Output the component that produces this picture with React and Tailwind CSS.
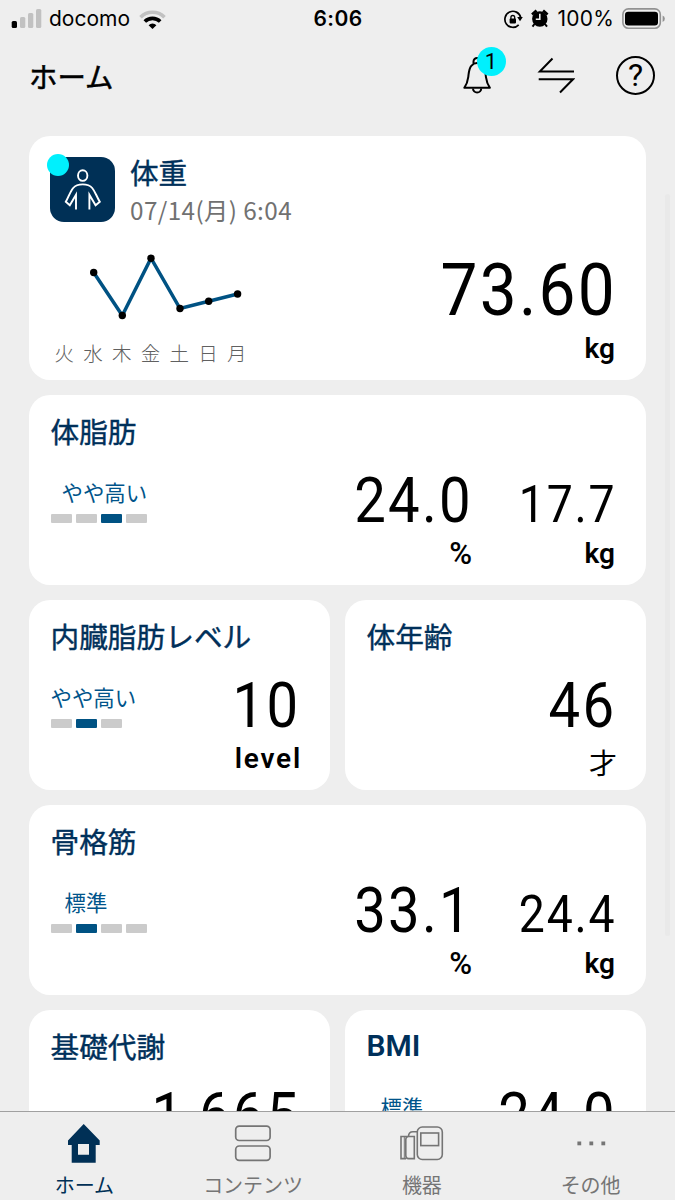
import clsx from "clsx";

const WEEKDAYS = ["火", "水", "木", "金", "土", "日", "月"];

const WEIGHT_POINTS = [
  [93.7, 272.5],
  [122.3, 315.5],
  [151, 258.2],
  [180, 308.5],
  [208.7, 301.3],
  [237.6, 294],
];

const Card = ({ title, latin, children }) => (
  <section className="h-[190px] shrink-0 bg-white rounded-[21px] pl-[21.5px] pr-[31px]">
    <h2
      className={clsx(
        "pt-[15px] leading-[41px] h-[56px] text-[#00305a] whitespace-nowrap",
        latin
          ? "font-['Roboto'] text-[30px] font-semibold"
          : "text-[28.7px] [-webkit-text-stroke:0.4px]",
      )}
    >
      {title}
    </h2>
    <div className="flex justify-between">{children}</div>
  </section>
);

// Rating label with its segmented gauge
const Level = ({ label, total, active, indent }) => (
  <div className="pt-[29px]">
    <p
      className={clsx(
        "text-[21.4px] leading-6 h-6 text-[#00548a] whitespace-nowrap",
        indent,
      )}
    >
      {label}
    </p>
    <div className="flex gap-[3.5px] mt-[10px]">
      {Array.from({ length: total }, (_, i) => (
        <span
          key={i}
          className={clsx(
            "w-[21.6px] h-[9px] rounded-[1px]",
            i === active ? "bg-[#005283]" : "bg-[#cbcbcb]",
          )}
        />
      ))}
    </div>
  </div>
);

const Unit = ({ children }) => (
  <span
    className={clsx(
      "leading-8 h-8",
      children === "%" ? "text-[31px] -mr-px" : "text-[28px]",
      children === "才" && "pt-[3px] -mr-[2px]",
      children === "%" && "font-['Roboto'] font-medium",
      children === "kg" && "font-['Roboto'] font-semibold",
      children === "level" &&
        "font-['Roboto'] font-semibold tracking-[1.8px] -mr-[3px]",
    )}
  >
    {children}
  </span>
);

const Value = ({ value, unit, size = "md", className }) => (
  <div className={clsx("flex flex-col items-end pt-[24px]", className)}>
    <span
      className={clsx(
        "font-['Roboto'] h-[52px] mb-[10.5px] whitespace-nowrap origin-right scale-x-90",
        size === "md" &&
          "text-[62.5px] leading-[52px] tracking-[2.5px] -mr-[1.5px]",
        size === "sm" && "text-[51.5px] leading-[60px] tracking-[2px] -mr-px",
      )}
    >
      {value}
    </span>
    <Unit>{unit}</Unit>
  </div>
);

const StatusBar = () => (
  <div className="flex items-center justify-between h-[37px] pl-[11px] pr-[10px] font-['Inter'] text-[21px] leading-6">
    <div className="flex items-center w-[290px]">
      <svg viewBox="11 8 31 20" className="w-[31px] h-[20px]">
        <rect x="11.7" y="20" width="5.3" height="7" rx="1.5" />
        <g fill="#c1c1c1">
          <rect x="20" y="16" width="5.3" height="11" rx="1.5" />
          <rect x="28" y="12" width="5.3" height="15" rx="1.5" />
          <rect x="36" y="8" width="5.3" height="19" rx="1.5" />
        </g>
      </svg>
      <span className="ml-[7px] w-[82px]">docomo</span>
      <svg
        viewBox="138 7 29 21"
        className="w-[29px] h-[21px] ml-[7px]"
        fill="none"
        strokeWidth="3.6"
      >
        <path d="M140.5 16.2a17 17 0 0 1 24 0" stroke="#c1c1c1" />
        <path d="M144.8 20.5a11 11 0 0 1 15.4 0" stroke="#000" />
        <path
          d="M148.6 24.2a5.5 5.5 0 0 1 7.8 0L152.5 28z"
          fill="#000"
          stroke="none"
        />
      </svg>
    </div>
    <span className="font-semibold tracking-[0.4px]">6:06</span>
    <div className="flex items-center justify-end w-[290px]">
      <svg
        viewBox="503 8 20 20"
        className="w-[20px] h-[20px]"
        fill="none"
        stroke="#000"
        strokeWidth="1.7"
      >
        <path d="M518.7 23.8a8 8 0 1 1 2-7.3" />
        <path d="M517.2 16h5.6l-2.8 4.2z" fill="#000" stroke="none" />
        <rect
          x="509.6"
          y="17.6"
          width="6.4"
          height="4.8"
          rx=".8"
          fill="#000"
          stroke="none"
        />
        <path d="M510.9 18v-1.6a1.9 1.9 0 0 1 3.8 0V18" strokeWidth="1.3" />
      </svg>
      <svg viewBox="530 8 20 19" className="w-[20px] h-[19px] ml-[7px]">
        <circle cx="539.8" cy="18" r="7.7" />
        <path
          d="M532 13.5l4.5-4M547.6 13.5l-4.5-4"
          stroke="#000"
          strokeWidth="2.6"
        />
        <path d="M534.5 23l-2 2.6M545 23l2 2.6" stroke="#000" strokeWidth="2" />
        <path
          d="M539.8 12.8v5.4h-4"
          stroke="#eee"
          strokeWidth="1.6"
          fill="none"
        />
      </svg>
      <span className="ml-[8px] tracking-[0.2px]">100%</span>
      <svg viewBox="621 7 44 22" className="w-[44px] h-[22px] ml-[7px]">
        <rect
          x="622.9"
          y="7.9"
          width="37.4"
          height="19.4"
          rx="5.5"
          fill="none"
          stroke="#929292"
          strokeWidth="1.6"
        />
        <rect x="625" y="10.8" width="33" height="13.7" rx="3.2" />
        <path d="M662.6 14.5a3.4 3.4 0 0 1 0 6.4z" fill="#929292" />
      </svg>
    </div>
  </div>
);

const Header = () => (
  <header className="flex items-center justify-between h-[84px] pl-[29px] pr-[20px] pb-[6px]">
    <h1 className="text-[28.4px] leading-10 [-webkit-text-stroke:0.5px]">
      ホーム
    </h1>
    <div className="flex items-center mb-[2px]">
      <div className="relative">
        <svg
          viewBox="462 56 30 39"
          className="w-[30px] h-[39px]"
          fill="none"
          stroke="#000"
          strokeWidth="2"
          strokeLinejoin="round"
        >
          <path d="M464.3 87.8h25.6c-2.3-3.2-3.3-5.8-4-11-.6-5-.7-8.5-3-11-1.5-1.7-3.5-2.7-5.8-2.7s-4.3 1-5.8 2.7c-2.3 2.5-2.4 6-3 11-.7 5.2-1.7 7.8-4 11z" />
          <path d="M473.5 63.5v-2a3.6 3.6 0 0 1 7.2 0v2M473 88.5a4.1 4.1 0 0 0 8.2 0" />
        </svg>
        <span className="absolute left-[14.5px] -top-[9px] w-[29px] h-[29px] rounded-full bg-[#00f0fd] font-['Roboto'] text-[22px] leading-[29px] text-center">
          1
        </span>
      </div>
      <svg
        viewBox="537 56 38 39"
        className="w-[38px] h-[39px] ml-[45px]"
        fill="none"
        stroke="#000"
        strokeWidth="2"
      >
        <path d="M574 71.6H539.8L552.5 58.5M538.7 79.3H573L560 92.5" />
      </svg>
      <span className="flex items-center justify-center ml-[41px] w-[39px] h-[39px] rounded-full border-2 border-black font-['Roboto'] text-[32px] leading-none">
        ?
      </span>
    </div>
  </header>
);

const WeightCard = () => (
  <section className="h-[244px] shrink-0 bg-white rounded-[21px] pl-[21px] pr-[31px]">
    <div className="flex h-[107px] pt-[21px]">
      <div className="relative w-[65px] h-[65px] rounded-[14px] bg-[#003056]">
        <svg
          viewBox="50 157 65 65"
          className="w-full h-full"
          fill="none"
          stroke="#fff"
          strokeWidth="1.9"
        >
          <ellipse cx="82.7" cy="175.6" rx="4.7" ry="5.3" />
          <path d="M76 209.5V194.8L69.8 205.2L65.8 201.8C69 196 70.3 191.5 73.2 188C75.6 185.2 79 184.4 82.7 184.4S89.8 185.2 92.2 188C95.1 191.5 96.4 196 99.8 201.8L95.6 205.2L89.4 194.8V209.5" />
        </svg>
        <span className="absolute -left-[3px] -top-[3px] w-[21.5px] h-[21.5px] rounded-full bg-[#00f0fd]" />
      </div>
      <div className="ml-[15px] whitespace-nowrap">
        <h2 className="text-[28.6px] leading-[36px] -mt-[3px] text-[#00305a] [-webkit-text-stroke:0.4px]">
          体重
        </h2>
        <p className="text-[24.3px] leading-[36px] mt-[2px] tracking-[0.4px] text-[#717171]">
          07/14(月) 6:04
        </p>
      </div>
    </div>
    <div className="flex justify-between">
      <div>
        <svg viewBox="50 243 201 87" className="w-[201px] h-[87px]">
          <polyline
            points={WEIGHT_POINTS.map((p) => p.join(",")).join(" ")}
            fill="none"
            stroke="#005283"
            strokeWidth="3.5"
          />
          {WEIGHT_POINTS.map(([x, y]) => (
            <circle key={x} cx={x} cy={y} r="3.7" />
          ))}
        </svg>
        <div className="flex w-[201px] mt-[11px] text-[19.5px] leading-6 font-light text-[#606060]">
          {WEEKDAYS.map((day) => (
            <span key={day} className="flex-1 text-center">
              {day}
            </span>
          ))}
        </div>
      </div>
      <div className="flex flex-col items-end pt-[17px]">
        <span className="font-['Roboto'] text-[73px] leading-[60px] h-[60px] mb-[12.5px] -mr-[1.5px] tracking-[2.5px] origin-right scale-x-90">
          73.60
        </span>
        <Unit>kg</Unit>
      </div>
    </div>
  </section>
);

const HomeIcon = () => (
  <svg viewBox="68 1123 34 41" className="w-[34px] h-[41px]" fill="#003056">
    <path
      fillRule="evenodd"
      d="M84.7 1124L100.7 1140.5V1145H96.7V1162.7H72.7V1145H69V1140.5zM79 1144V1154.8H90V1144z"
    />
  </svg>
);

const ContentsIcon = () => (
  <svg
    viewBox="234 1123 38 41"
    className="w-[38px] h-[41px]"
    fill="none"
    stroke="#757575"
    strokeWidth="1.7"
  >
    <rect x="235.7" y="1126.2" width="34.4" height="14.3" rx="3.5" />
    <rect x="235.7" y="1146" width="34.4" height="14.3" rx="3.5" />
  </svg>
);

const DeviceIcon = () => (
  <svg
    viewBox="400 1123 44 41"
    className="w-[44px] h-[41px]"
    fill="none"
    stroke="#757575"
    strokeWidth="1.6"
  >
    <rect x="417.3" y="1127" width="25" height="32.5" rx="5" />
    <rect x="420.8" y="1133" width="17.8" height="12.6" />
    <path d="M408 1136.5H401V1158.6H406" />
    <path d="M404.3 1136.5V1158.6" strokeWidth="1" />
    <path d="M408 1136.5H414.3V1158.6H408.5Q405.8 1158.6 405.8 1155.5V1139.5Q405.8 1136.5 408.5 1136.5C408.5 1133 410.5 1131.7 413 1131.7H417" />
  </svg>
);

const MoreIcon = () => (
  <svg viewBox="575 1123 30 41" className="w-[30px] h-[41px]" fill="#757575">
    <rect x="576.4" y="1141.5" width="3.8" height="3.8" />
    <rect x="588.4" y="1141.5" width="3.8" height="3.8" />
    <rect x="600.4" y="1141.5" width="3.8" height="3.8" />
  </svg>
);

const TABS = [
  { label: "ホーム", icon: HomeIcon, active: true },
  { label: "コンテンツ", icon: ContentsIcon },
  { label: "機器", icon: DeviceIcon },
  { label: "その他", icon: MoreIcon },
];

const TabBar = () => (
  <nav className="flex h-[89px] shrink-0 border-t border-[#a0a0a0] bg-[#eee]">
    {TABS.map(({ label, icon: Icon, active }) => (
      <div
        key={label}
        className={clsx(
          "flex-1 flex flex-col items-center pt-[11px] text-[20px] leading-6",
          active ? "text-[#003056]" : "text-[#757575]",
        )}
      >
        <Icon />
        <span className="mt-[9px]">{label}</span>
      </div>
    ))}
  </nav>
);

const App = () => {
  return (
    <div className="relative flex flex-col w-[675px] h-[1200px] overflow-hidden bg-[#eee] text-black font-['Noto_Sans_CJK_JP',sans-serif]">
      <StatusBar />
      <Header />
      <main className="flex-1 min-h-0 overflow-hidden pt-[15px] px-[29px] flex flex-col gap-[15px]">
        <WeightCard />

        <Card title="体脂肪">
          <Level label="やや高い" total={4} active={2} indent="pl-[11px]" />
          <div className="flex">
            <Value value="24.0" unit="%" />
            <Value value="17.7" unit="kg" size="sm" className="w-[144px]" />
          </div>
        </Card>

        <div className="grid grid-cols-2 gap-[15px] shrink-0">
          <Card title="内臓脂肪レベル">
            <Level label="やや高い" total={3} active={1} />
            <Value value="10" unit="level" />
          </Card>
          <Card title="体年齢">
            <span />
            <Value value="46" unit="才" />
          </Card>
        </div>

        <Card title="骨格筋">
          <Level label="標準" total={4} active={1} indent="pl-[14px]" />
          <div className="flex">
            <Value value="33.1" unit="%" />
            <Value value="24.4" unit="kg" size="sm" className="w-[144px]" />
          </div>
        </Card>

        <div className="grid grid-cols-2 gap-[15px] shrink-0">
          <Card title="基礎代謝">
            <span />
            <Value value="1,665" />
          </Card>
          <Card title="BMI" latin>
            <Level label="標準" total={4} active={1} indent="pl-[14px]" />
            <Value value="24.0" />
          </Card>
        </div>
      </main>
      <TabBar />
      {/* scroll indicator */}
      <div className="absolute right-[5px] top-[194px] w-[5px] h-[742px] rounded-full bg-[#e9e9e9]" />
    </div>
  );
};

export default App;
